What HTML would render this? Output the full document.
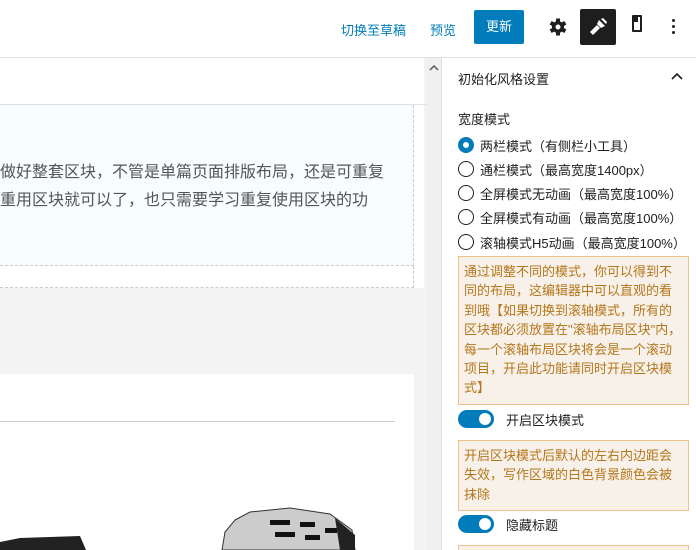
<!DOCTYPE html>
<html><head><meta charset="utf-8"><style>
*{box-sizing:border-box;margin:0;padding:0}
html,body{width:696px;height:550px;overflow:hidden}
body{background:#fff;font-family:"Liberation Sans","Noto Sans CJK SC",sans-serif;position:relative;color:#1e1e1e}
.abs{position:absolute}
.hdr{left:0;top:0;width:696px;height:58px;border-bottom:1px solid #e0e0e0;background:#fff}
.lnk{color:#007cba;font-size:13px;top:20px}
.btn{left:474px;top:10px;width:50px;height:34px;background:#007cba;color:#fff;font-size:13px;line-height:34px;text-align:center;border-radius:2px}
.side{left:441px;top:58px;width:255px;height:492px;border-left:1px solid #e0e0e0;background:#fff}
.radio{position:absolute;left:458px;width:16px;height:16px;border:1.5px solid #1e1e1e;border-radius:50%}
.rl{position:absolute;left:480px;font-size:13px;color:#1e1e1e}
.note{position:absolute;left:458px;width:231px;background:#f7f1ea;border:1px solid #f0c08e;color:#b6761a;font-size:13px;line-height:19.4px;padding:5px 5px}
.tog{position:absolute;left:458px;width:36px;height:18px;border-radius:9px;background:#007cba}
.tog i{position:absolute;right:3px;top:3px;width:12px;height:12px;border-radius:50%;background:#fff}
</style></head><body>
<div class="abs hdr"></div>
<div class="abs lnk" style="left:341px">切换至草稿</div>
<div class="abs lnk" style="left:430px">预览</div>
<div class="abs btn">更新</div>
<svg class="abs" style="left:548px;top:17px" width="20" height="20" viewBox="0 0 20 20"><g fill="#1e1e1e"><circle cx="10" cy="10" r="6"/><rect x="8" y="1.5" width="4" height="17"/><rect x="8" y="1.5" width="4" height="17" transform="rotate(60 10 10)"/><rect x="8" y="1.5" width="4" height="17" transform="rotate(120 10 10)"/></g><circle cx="10" cy="10" r="2.5" fill="#fff"/></svg>
<div class="abs" style="left:580px;top:9px;width:36px;height:36px;background:#1e1e1e;border-radius:2px"></div>
<svg class="abs" style="left:586px;top:15px" width="24" height="24" viewBox="0 0 24 24"><g fill="#fff"><path d="M13 5l6 6-4 2-4-4z"/><path d="M11 10l3 3-7 7-3-3z"/><path d="M15 4l2-1 4 4-1 2z"/></g></svg>
<div class="abs" style="left:632px;top:15px;width:10px;height:17px;border:2px solid #1e1e1e;border-radius:1px"></div>
<div class="abs" style="left:634px;top:17px;width:4px;height:5px;background:#1e1e1e"></div>
<div class="abs" style="left:672px;top:19px;width:3px;height:3px;background:#1e1e1e;border-radius:50%;box-shadow:0 6px 0 #1e1e1e,0 12px 0 #1e1e1e"></div>

<div class="abs" style="left:0;top:58px;width:427px;height:492px;background:#f3f3f3"></div>
<div class="abs" style="left:0;top:58px;width:424px;height:230px;background:#fff"></div>
<div class="abs" style="left:0;top:104px;width:427px;height:1px;background:#e0e0e0"></div>
<div class="abs" style="left:0;top:105px;width:414px;height:161px;background:#f7fcff;border-right:1px dashed #ccc;border-bottom:1px dashed #ccc"></div>
<div class="abs" style="left:0;top:266px;width:414px;height:22px;border-right:1px dashed #ccc;border-bottom:1px dashed #ccc"></div>
<div class="abs" style="left:0;top:159px;font-size:16px;color:#555;line-height:28px;white-space:nowrap">做好整套区块，不管是单篇页面排版布局，还是可重复<br>重用区块就可以了，也只需要学习重复使用区块的功</div>
<div class="abs" style="left:0;top:374px;width:414px;height:176px;background:#fff"></div>
<div class="abs" style="left:0;top:421px;width:395px;height:1px;background:#ccc"></div>
<svg class="abs" style="left:0;top:500px" width="420" height="50" viewBox="0 0 420 50"><path d="M0 42 L20 38 L80 36 L86 50 L0 50z" fill="#222"/><path d="M235 20 L250 12 L290 8 L330 14 L352 30 L355 50 L222 50 L225 32z" fill="#ccc" stroke="#333"/><g fill="#111"><rect x="270" y="20" width="20" height="5"/><rect x="275" y="32" width="20" height="5"/><rect x="300" y="22" width="15" height="5"/><rect x="305" y="35" width="15" height="5"/><rect x="325" y="28" width="12" height="5"/></g><path d="M335 18 L355 35 L355 50 L340 50z" fill="#222"/></svg>
<div class="abs" style="left:427px;top:58px;width:14px;height:492px;background:#f0f0f0"></div>
<svg class="abs" style="left:429px;top:64px" width="10" height="7"><path d="M1 6L5 2L9 6" fill="none" stroke="#555" stroke-width="1.5"/></svg>

<div class="abs side"></div>
<div class="abs" style="left:458px;top:69px;font-size:13px">初始化风格设置</div>
<svg class="abs" style="left:671px;top:72px" width="12" height="8"><path d="M1 7L6 2L11 7" fill="none" stroke="#1e1e1e" stroke-width="1.6"/></svg>
<div class="abs" style="left:458px;top:109px;font-size:13px">宽度模式</div>
<div class="radio" style="top:137px;border:5px solid #007cba"></div><div class="rl" style="top:136px">两栏模式（有侧栏小工具）</div>
<div class="radio" style="top:161px"></div><div class="rl" style="top:160px">通栏模式（最高宽度1400px）</div>
<div class="radio" style="top:185px"></div><div class="rl" style="top:184px">全屏模式无动画（最高宽度100%）</div>
<div class="radio" style="top:209px"></div><div class="rl" style="top:208px">全屏模式有动画（最高宽度100%）</div>
<div class="radio" style="top:234px"></div><div class="rl" style="top:233px">滚轴模式H5动画（最高宽度100%）</div>
<div class="note" style="top:256px;height:149px">通过调整不同的模式，你可以得到不同的布局，这编辑器中可以直观的看到哦【如果切换到滚轴模式，所有的区块都必须放置在"滚轴布局区块"内，每一个滚轴布局区块将会是一个滚动项目，开启此功能请同时开启区块模式】</div>
<div class="tog" style="top:410px"><i></i></div><div class="rl" style="left:506px;top:410px">开启区块模式</div>
<div class="note" style="top:440px;height:71px">开启区块模式后默认的左右内边距会失效，写作区域的白色背景颜色会被抹除</div>
<div class="tog" style="top:515px"><i></i></div><div class="rl" style="left:506px;top:515px">隐藏标题</div>
<div class="note" style="top:545px;height:20px"></div>
</body></html>
